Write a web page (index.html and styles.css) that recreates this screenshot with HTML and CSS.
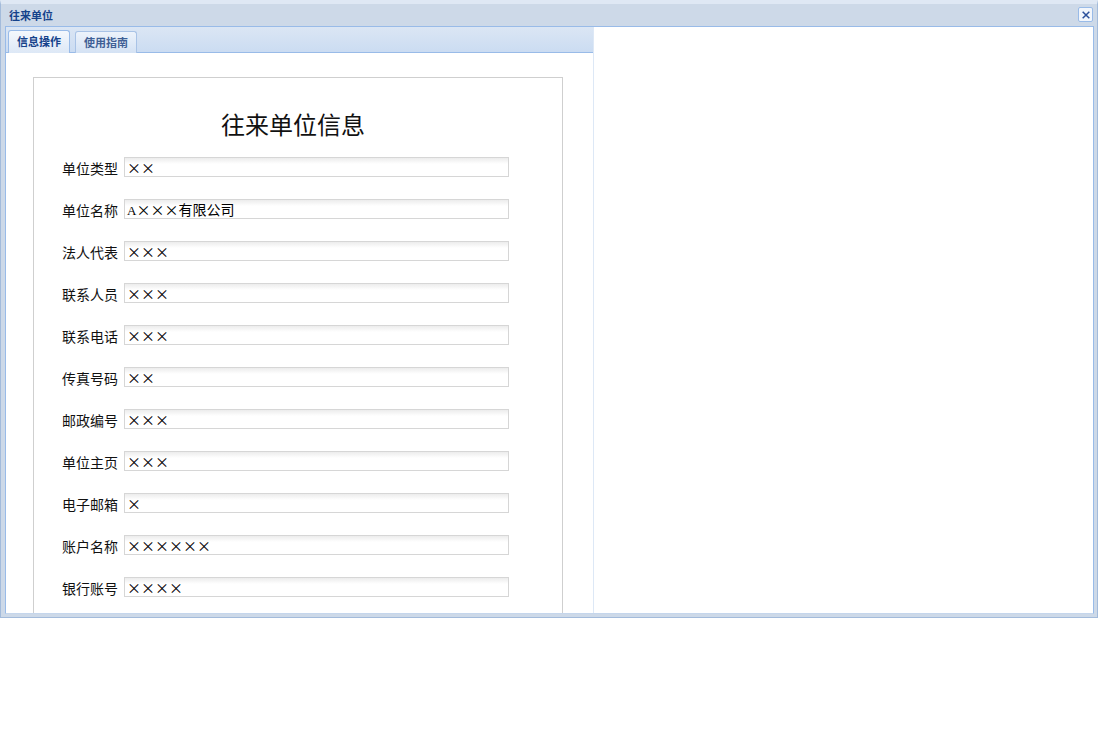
FILE: index.html
```html
<!DOCTYPE html>
<html lang="zh">
<head>
<meta charset="utf-8">
<title>往来单位</title>
<link rel="stylesheet" href="styles.css">
</head>
<body>
<div class="win">
  <div class="win-head">
    <span class="win-title">往来单位</span>
    <span class="win-close"><svg width="12" height="12" viewBox="0 0 12 12"><path d="M2 2 L10 10 M10 2 L2 10" stroke="#2a4f9a" stroke-width="1.8" fill="none"/></svg></span>
  </div>
  <div class="win-body">
    <div class="left">
      <div class="tabs">
        <span class="tab active">信息操作</span>
        <span class="tab">使用指南</span>
      </div>
      <div class="left-content">
        <div class="form-box">
          <h1 class="form-title">往来单位信息</h1>
          <div class="row"><span class="lbl">单位类型</span><span class="inp">××</span></div>
          <div class="row"><span class="lbl">单位名称</span><span class="inp"><span class="latin">A</span>×××有限公司</span></div>
          <div class="row"><span class="lbl">法人代表</span><span class="inp">×××</span></div>
          <div class="row"><span class="lbl">联系人员</span><span class="inp">×××</span></div>
          <div class="row"><span class="lbl">联系电话</span><span class="inp">×××</span></div>
          <div class="row"><span class="lbl">传真号码</span><span class="inp">××</span></div>
          <div class="row"><span class="lbl">邮政编号</span><span class="inp">×××</span></div>
          <div class="row"><span class="lbl">单位主页</span><span class="inp">×××</span></div>
          <div class="row"><span class="lbl">电子邮箱</span><span class="inp">×</span></div>
          <div class="row"><span class="lbl">账户名称</span><span class="inp">××××××</span></div>
          <div class="row"><span class="lbl">银行账号</span><span class="inp">××××</span></div>
        </div>
      </div>
    </div>
    <div class="right"></div>
  </div>
</div>
</body>
</html>
```
FILE: styles.css
```css
html, body { margin: 0; padding: 0; background: #fff; }
body { font-family: "Noto Sans CJK SC", "Liberation Sans", sans-serif; }
.win {
  width: 1098px; height: 618px; box-sizing: border-box;
  background: #cdd9e8;
  border: 1px solid #a3bbdb;
  border-top: 4px solid #dfe8f4;
  display: flex; flex-direction: column;
  padding: 0 3px 3px 4px;
}
.win-head {
  height: 21px; flex: none;
  display: flex; align-items: center; justify-content: space-between;
  padding: 0 1px 1px 4px;
}
.win-title { font-size: 11px; font-weight: bold; color: #15428b; line-height: 20px; }
.win-close {
  width: 13px; height: 13px; border: 1px solid #99bbe8; border-radius: 2px;
  background: #f2f6fc; display: flex; align-items: center; justify-content: center;
}
.win-close svg { width: 10px; height: 10px; }
.win-body { flex: 1; display: flex; min-height: 0; border: 1px solid #99bbe8; border-bottom-color: #c5d6ec; background: #fff; }
.left { width: 587px; flex: none; display: flex; flex-direction: column; overflow: hidden; }
.tabs {
  height: 26px; flex: none; box-sizing: border-box;
  background: linear-gradient(#dbe6f4, #cbdcf2);
  border-bottom: 1px solid #99bbe8;
  display: flex; align-items: flex-end; gap: 5px; padding-left: 2px;
}
.tab {
  height: 22px; box-sizing: border-box; padding: 0 8px;
  font-size: 11px; font-weight: bold; color: #3f5f95; line-height: 21px;
  border: 1px solid #a9c3e6; border-bottom: none; border-radius: 3px 3px 0 0;
  background: linear-gradient(#edf3fb, #d4e2f4);
  margin-bottom: -1px;
}
.tab.active { color: #15428b; background: linear-gradient(#f4f8fd, #dde8f6); border-color: #99bbe8; height: 23px; }
.left-content { flex: 1; background: #fff; padding: 24px 0 0 27px; overflow: hidden; }
.form-box {
  width: 530px; box-sizing: border-box; border: 1px solid #cfcfcf; border-bottom: none;
  padding: 29px 0 0 28px; height: 600px;
}
.form-title { margin: 0 10px 16px -28px; text-align: center; font-weight: normal; font-size: 24px; line-height: 34px; color: #111; }
.row { display: flex; align-items: center; height: 20px; margin-bottom: 22px; }
.lbl { font-size: 14px; color: #111; width: 56px; margin-right: 6px; white-space: nowrap; position: relative; top: 1px; }
.inp {
  width: 385px; height: 20px; box-sizing: border-box; border: 1px solid #d6d6d6;
  background: linear-gradient(#ececec, #fff 6px);
  font-family: "Noto Sans CJK SC", sans-serif;
  font-feature-settings: "fwid" 1;
  font-size: 14px; line-height: 18px; padding-left: 2px; color: #000;
  white-space: nowrap;
}
.inp .latin { font-family: "Liberation Serif", serif; font-feature-settings: normal; font-size: 13px; }
.right { flex: 1; background: #fff; border-left: 1px solid #dde8f6; }
```
